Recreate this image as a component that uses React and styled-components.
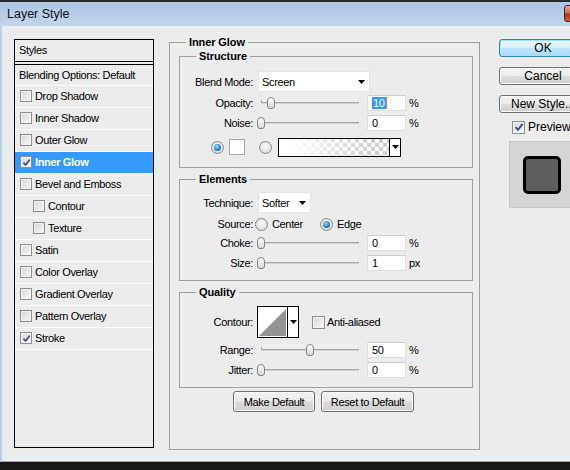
import React from "react"
import styled, { createGlobalStyle } from "styled-components"

const GlobalStyle = createGlobalStyle`
  html, body {
    margin: 0;
    padding: 0;
    background: #171717;
  }
  body {
    font-family: "Liberation Sans", Arial, sans-serif;
    font-size: 11px;
    letter-spacing: -0.35px;
    color: #000;
  }
  * {
    box-sizing: border-box;
  }
`

const Window = styled.div`
  width: 570px;
  height: 470px;
  overflow: hidden;
  display: flex;
  flex-direction: column;
  background: #171717;
`

const TitleBar = styled.div`
  flex: 0 0 26px;
  border-top: 2px solid #2b2b2b;
  background: linear-gradient(to bottom, #aec6e2, #c2d5eb);
  display: flex;
  align-items: center;
  justify-content: space-between;
  padding-left: 7px;
  overflow: hidden;
`

const Title = styled.span`
  font-size: 12.5px;
  letter-spacing: 0;
  color: #111;
`

const CloseButton = styled.div`
  flex: 0 0 43px;
  height: 17px;
  margin-right: -37px;
  margin-top: -2px;
  border: 1px solid #5a1d14;
  border-radius: 3px;
  background: linear-gradient(#eaa99a, #d46a58 45%, #b8321f 55%, #c95a3e);
`

const Body = styled.div`
  flex: 1;
  display: flex;
  align-items: flex-start;
  background: #ececec;
  border-left: 2px solid #b7d3ea;
  border-bottom: 1px solid #3ec6e6;
  padding-left: 12px;
  overflow: hidden;
`

const Taskbar = styled.div`
  flex: 0 0 8px;
  background: #171717;
`

/* left list of styles */

const StylesPanel = styled.div`
  flex-shrink: 0;
  width: 140px;
  height: 409px;
  margin-top: 13px;
  border: 1px solid #000;
  display: flex;
  flex-direction: column;
`

const PanelHeader = styled.div`
  height: 22px;
  border-bottom: 1px solid #000;
  padding: 0 0 1px 4px;
  display: flex;
  align-items: center;
`

const StyleList = styled.div`
  margin-top: 2px;
  border-top: 1px solid #000;
`

const StyleRow = styled.div`
  height: ${(p) => (p.$plain ? 21 : 22)}px;
  border-bottom: 1px solid #fff;
  display: flex;
  align-items: center;
  gap: 3px;
  padding-left: ${(p) => (p.$indent ? 18 : p.$plain ? 4 : 5)}px;
  padding-bottom: 1px;
  background: ${(p) => (p.$active ? "#3399ff" : "transparent")};
  color: ${(p) => (p.$active ? "#fff" : "#000")};
  font-weight: ${(p) => (p.$active ? "bold" : "normal")};
`

/* form controls */

const CheckBox = styled.span`
  flex-shrink: 0;
  width: ${(p) => p.$size}px;
  height: ${(p) => p.$size}px;
  border: 1px solid #8e8f8f;
  background: linear-gradient(135deg, #d6d6d6, #f7f7f7);
  box-shadow: inset 0 0 0 1px #f2f2f2;
  display: inline-flex;
  align-items: center;
  justify-content: center;
`

const RadioDot = styled.span`
  flex-shrink: 0;
  width: 13px;
  height: 13px;
  border-radius: 50%;
  border: 1px solid #8a8a8a;
  background: radial-gradient(circle at 50% 40%, #fbfbfb, #d3d3d3);
  display: inline-flex;
  align-items: center;
  justify-content: center;

  &::after {
    content: "";
    display: ${(p) => (p.$on ? "block" : "none")};
    width: 7px;
    height: 7px;
    border-radius: 50%;
    background: radial-gradient(circle at 40% 35%, #8fdcff, #1d74bf 65%, #15477f);
  }
`

const Group = styled.fieldset`
  margin: ${(p) => p.$margin};
  padding: ${(p) => p.$padding};
  border: 1px solid #a0a0a0;
  min-width: 0;
  flex-shrink: 0;
  ${(p) => p.$width && `width: ${p.$width}px;`}
  ${(p) => p.$height && `height: ${p.$height}px;`}
`

const GroupTitle = styled.legend`
  font-weight: bold;
  letter-spacing: -0.1px;
  line-height: 13px;
  padding: 0 3px;
  margin-left: 16px;
`

const Row = styled.div`
  display: flex;
  align-items: center;
  height: ${(p) => p.$h}px;
  margin-top: ${(p) => p.$mt || 0}px;
  padding-left: ${(p) => p.$pl || 0}px;
`

const Label = styled.span`
  flex-shrink: 0;
  width: 73px;
  text-align: right;
  margin-right: ${(p) => p.$gap ?? 5}px;
`

const Select = styled.div`
  width: ${(p) => p.$w}px;
  height: 21px;
  background: #fff;
  border: 1px solid #e4e4e4;
  display: flex;
  align-items: center;
  justify-content: space-between;
  padding: 0 4px 0 3px;
`

const SliderBox = styled.div`
  position: relative;
  flex-shrink: 0;
  width: 104px;
  height: 14px;
  background:
    linear-gradient(#a7a7a7, #a7a7a7) 3px 6px / 98px 1px no-repeat,
    linear-gradient(#d2d2d2, #d2d2d2) 3px 7px / 98px 1px no-repeat,
    linear-gradient(#a7a7a7, #a7a7a7) 3px 4px / 1px 4px no-repeat;
`

const Thumb = styled.span`
  position: absolute;
  top: 1px;
  width: 8px;
  height: 12px;
  border: 1px solid #858585;
  border-radius: 4px 4px 3px 3px;
  background: linear-gradient(#ffffff, #d4d4d4);
`

const NumberBox = styled.div`
  flex-shrink: 0;
  width: 39px;
  height: 16px;
  margin-left: 5px;
  background: #fff;
  border: 1px solid #e0e0e0;
  border-top-color: #cfcfcf;
  display: flex;
  align-items: center;
  padding-left: 4px;
`

const Selection = styled.span`
  background: #3399ff;
  color: #fff;
  padding: 0 1px;
  line-height: 12px;
`

const Caret = styled.span`
  width: 1px;
  height: 12px;
  background: #ff7f00;
`

const Unit = styled.span`
  margin-left: 3px;
`

const Swatch = styled.span`
  width: 16px;
  height: 16px;
  margin-left: 5px;
  border: 1px solid #a8a8a8;
  background: #fff;
`

const GradientPicker = styled.div`
  width: 123px;
  height: 19px;
  margin-left: 6px;
  border: 1px solid #000;
  display: flex;
`

const GradientFill = styled.div`
  flex: 1;
  background:
    linear-gradient(to right, #fff 8%, rgba(255, 255, 255, 0) 85%),
    repeating-conic-gradient(#d0d0d0 0 25%, #fff 0 50%) 0 0 / 8px 8px;
`

const ArrowCell = styled.div`
  width: ${(p) => p.$w}px;
  border-left: 1px solid #000;
  background: #fff;
  display: flex;
  align-items: center;
  justify-content: center;
`

const ContourPicker = styled.div`
  width: 42px;
  height: 32px;
  border: 1px solid #000;
  display: flex;
  background: #fff;
`

const InlineCheck = styled.div`
  display: flex;
  align-items: center;
  gap: 2px;
  margin-left: ${(p) => p.$ml}px;
`

const ButtonRow = styled.div`
  display: flex;
  justify-content: center;
  gap: 6px;
  margin-top: 3px;
  padding-right: 2px;
`

const PushButton = styled.div`
  width: ${(p) => p.$w}px;
  height: 21px;
  border: 1px solid #707070;
  border-radius: 3px;
  background: linear-gradient(#f3f3f3 0%, #ebebeb 50%, #dddddd 50%, #cfcfcf 100%);
  box-shadow: inset 0 0 0 1px #fbfbfb;
  display: flex;
  align-items: center;
  justify-content: center;
`

/* right column */

const SideColumn = styled.div`
  flex-shrink: 0;
  width: 88px;
  margin: 13px 0 0 19px;
  display: flex;
  flex-direction: column;
`

const DialogButton = styled.div`
  height: 18px;
  margin-top: ${(p) => p.$mt || 0}px;
  border: 1px solid ${(p) => (p.$primary ? "#3c7fb1" : "#707070")};
  border-radius: 3px;
  background: ${(p) =>
    p.$primary
      ? "linear-gradient(#eaf6fd 0%, #d9f0fc 50%, #bee6fd 50%, #a7d9f5 100%)"
      : "linear-gradient(#f3f3f3 0%, #ebebeb 50%, #dddddd 50%, #cfcfcf 100%)"};
  box-shadow: inset 0 0 0 1px ${(p) => (p.$primary ? "#9fe2fb" : "#fbfbfb")};
  display: flex;
  align-items: center;
  justify-content: center;
  font-size: 12px;
  letter-spacing: 0;
`

const PreviewToggle = styled.div`
  display: flex;
  align-items: center;
  gap: 3px;
  height: 14px;
  margin: 7px 0 0 13px;
  font-size: 12px;
  letter-spacing: 0;
`

const PreviewBox = styled.div`
  width: 65px;
  height: 67px;
  margin: 7px 0 0 10px;
  background: #d5d5d5;
  border: 1px solid #c8c8c8;
  display: flex;
  align-items: center;
  justify-content: center;
`

const PreviewSquare = styled.div`
  width: 38px;
  height: 38px;
  border: 3px solid #000;
  border-radius: 5px;
  background: #5d5d5d;
`

const DownArrow = () => (
  <svg width="7" height="4" viewBox="0 0 7 4">
    <path d="M0 0h7L3.5 4z" fill="#000" />
  </svg>
)

const Tick = ({ size }) => (
  <svg width={size - 3} height={size - 3} viewBox="0 0 10 10">
    <path d="M1.6 5.2 L4 7.8 L8.6 1.8" fill="none" stroke="#3c4f8e" strokeWidth="1.9" />
  </svg>
)

const Check = ({ on, size = 13 }) => (
  <CheckBox $size={size}>{on && <Tick size={size} />}</CheckBox>
)

const Slider = ({ value }) => (
  <SliderBox>
    <Thumb style={{ left: `${Math.round(3 + value * 0.98 - 4)}px` }} />
  </SliderBox>
)

const SliderRow = ({ label, value, text, unit, h, mt, selected }) => (
  <Row $h={h} $mt={mt}>
    <Label $gap={5}>{label}</Label>
    <Slider value={value} />
    <NumberBox>
      {selected ? (
        <>
          <Selection>{text}</Selection>
          <Caret />
        </>
      ) : (
        text
      )}
    </NumberBox>
    <Unit>{unit}</Unit>
  </Row>
)

const styleItems = [
  { name: "Drop Shadow" },
  { name: "Inner Shadow" },
  { name: "Outer Glow" },
  { name: "Inner Glow", on: true, active: true },
  { name: "Bevel and Emboss" },
  { name: "Contour", indent: true },
  { name: "Texture", indent: true },
  { name: "Satin" },
  { name: "Color Overlay" },
  { name: "Gradient Overlay" },
  { name: "Pattern Overlay" },
  { name: "Stroke", on: true },
]

export default function App() {
  return (
    <Window>
      <GlobalStyle />
      <TitleBar>
        <Title>Layer Style</Title>
        <CloseButton />
      </TitleBar>
      <Body>
        <StylesPanel>
          <PanelHeader>Styles</PanelHeader>
          <StyleList>
            <StyleRow $plain>Blending Options: Default</StyleRow>
            {styleItems.map((item) => (
              <StyleRow key={item.name} $indent={item.indent} $active={item.active}>
                <Check on={item.on} size={12} />
                {item.name}
              </StyleRow>
            ))}
          </StyleList>
        </StylesPanel>

        <Group $margin="10px 0 0 15px" $padding="0" $width={311} $height={414}>
          <GroupTitle>Inner Glow</GroupTitle>

          <Group $margin="1px 6px 0 9px" $padding="0 0 10px 0">
            <GroupTitle>Structure</GroupTitle>
            <Row $h={21} $mt={8}>
              <Label>Blend Mode:</Label>
              <Select $w={112}>
                Screen
                <DownArrow />
              </Select>
            </Row>
            <SliderRow label="Opacity:" value={10} text="10" unit="%" h={20} mt={1} selected />
            <SliderRow label="Noise:" value={0} text="0" unit="%" h={20} />
            <Row $h={20} $mt={4} $pl={31}>
              <RadioDot $on />
              <Swatch />
              <RadioDot style={{ marginLeft: 14 }} />
              <GradientPicker>
                <GradientFill />
                <ArrowCell $w={11}>
                  <DownArrow />
                </ArrowCell>
              </GradientPicker>
            </Row>
          </Group>

          <Group $margin="5px 6px 0 9px" $padding="0 0 7px 0">
            <GroupTitle>Elements</GroupTitle>
            <Row $h={21} $mt={6}>
              <Label>Technique:</Label>
              <Select $w={53}>
                Softer
                <DownArrow />
              </Select>
            </Row>
            <Row $h={18} $mt={2}>
              <Label $gap={2}>Source:</Label>
              <RadioDot />
              <span style={{ marginLeft: 4 }}>Center</span>
              <RadioDot $on style={{ marginLeft: 17 }} />
              <span style={{ marginLeft: 4 }}>Edge</span>
            </Row>
            <SliderRow label="Choke:" value={0} text="0" unit="%" h={20} />
            <SliderRow label="Size:" value={0} text="1" unit="px" h={20} />
          </Group>

          <Group $margin="5px 6px 0 9px" $padding="0 0 7px 0">
            <GroupTitle>Quality</GroupTitle>
            <Row $h={32} $mt={7}>
              <Label $gap={4}>Contour:</Label>
              <ContourPicker>
                <svg width="29" height="30" viewBox="0 0 29 30">
                  <path d="M1 29 L28 2 L28 29 Z" fill="#939393" />
                </svg>
                <ArrowCell $w={11}>
                  <DownArrow />
                </ArrowCell>
              </ContourPicker>
              <InlineCheck $ml={13}>
                <Check />
                Anti-aliased
              </InlineCheck>
            </Row>
            <SliderRow label="Range:" value={50} text="50" unit="%" h={20} mt={2} />
            <SliderRow label="Jitter:" value={0} text="0" unit="%" h={20} />
          </Group>

          <ButtonRow>
            <PushButton $w={82}>Make Default</PushButton>
            <PushButton $w={93}>Reset to Default</PushButton>
          </ButtonRow>
        </Group>

        <SideColumn>
          <DialogButton $primary>OK</DialogButton>
          <DialogButton $mt={10}>Cancel</DialogButton>
          <DialogButton $mt={10}>New Style...</DialogButton>
          <PreviewToggle>
            <Check on />
            Preview
          </PreviewToggle>
          <PreviewBox>
            <PreviewSquare />
          </PreviewBox>
        </SideColumn>
      </Body>
      <Taskbar />
    </Window>
  )
}
